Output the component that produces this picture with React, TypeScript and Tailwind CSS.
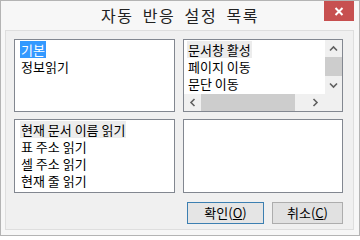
import React from "react";

const leftTopItems = ["기본", "정보읽기"];
const rightTopItems = ["문서창 활성", "페이지 이동", "문단 이동"];
const leftBottomItems = ["현재 문서 이름 읽기", "표 주소 읽기", "셀 주소 읽기", "현재 줄 읽기"];

const font = { fontFamily: '"Noto Sans CJK KR", "Noto Sans", sans-serif' };

// small chevron used by the scroll bar arrows
const Chevron: React.FC<{ dir: "up" | "down" | "left" | "right" }> = ({ dir }) => {
  const rot = { up: 0, right: 90, down: 180, left: 270 }[dir];
  return (
    <svg width="9" height="9" viewBox="0 0 9 9" style={{ transform: `rotate(${rot}deg)` }}>
      <path d="M1 6.5 L4.5 3 L8 6.5" fill="none" stroke="#606060" strokeWidth="1.6" />
    </svg>
  );
};

const ListBox: React.FC<{ items: string[]; selected?: number; focused?: boolean }> = ({
  items,
  selected,
  focused,
}) => (
  <div className="border border-[#828790] bg-white h-full">
    <ul className="pl-[5px] pt-[1px]">
      {items.map((item, idx) => (
        <li key={item} className="flex h-[17px]">
          <span
            className={`inline-block h-[17px] px-[1px] text-[13px] leading-[17px] whitespace-nowrap ${
              idx === selected
                ? focused
                  ? "bg-[#3399ff] text-white"
                  : "bg-[#ececec] text-black"
                : "text-black"
            }`}
          >
            {item}
          </span>
        </li>
      ))}
    </ul>
  </div>
);

const ScrollListBox: React.FC = () => (
  <div className="border border-[#828790] bg-white h-full flex flex-col">
    <div className="flex flex-1 min-h-0">
      <ul className="flex-1 pl-[3px] pt-[1px] overflow-hidden">
        {rightTopItems.map((item, idx) => (
          <li key={item} className="flex h-[17px]">
            <span
              className={`inline-block h-[17px] px-[1px] text-[13px] leading-[17px] whitespace-nowrap ${
                idx === 0 ? "bg-[#ececec]" : ""
              } text-black`}
            >
              {item}
            </span>
          </li>
        ))}
      </ul>
      {/* vertical scroll bar */}
      <div className="w-[17px] bg-[#f0f0f0] flex flex-col">
        <div className="h-[17px] flex items-center justify-center">
          <Chevron dir="up" />
        </div>
        <div className="h-[19px] bg-[#cdcdcd]" />
        <div className="flex-1 flex items-end justify-center pb-[4px]">
          <Chevron dir="down" />
        </div>
      </div>
    </div>
    {/* horizontal scroll bar */}
    <div className="h-[17px] flex bg-[#f0f0f0]">
      <div className="w-[17px] flex items-center justify-center">
        <Chevron dir="left" />
      </div>
      <div className="w-[94px] bg-[#cdcdcd]" />
      <div className="flex-1 flex items-center justify-end pr-[5px]">
        <Chevron dir="right" />
      </div>
      <div className="w-[17px]" />
    </div>
  </div>
);

const App: React.FC = () => {
  return (
    <div
      className="w-[360px] h-[236px] bg-[#f7f7f7] border border-[#b4b4b4] relative flex flex-col"
      style={font}
    >
      {/* Title bar */}
      <div className="h-[29px] flex items-center justify-center">
        <span className="text-[16px] leading-[20px] text-[#222] tracking-[1.6px] [word-spacing:4px] pb-[1px]">
          자동 반응 설정 목록
        </span>
      </div>
      <button className="absolute top-0 right-[5px] w-[30px] h-[20px] bg-[#c75050] flex items-center justify-center">
        <svg width="10" height="9" viewBox="0 0 10 9">
          <path d="M1.5 1 L8.5 8 M8.5 1 L1.5 8" stroke="white" strokeWidth="2" />
        </svg>
      </button>

      {/* Main panel */}
      <div className="ml-[4px] w-[349px] h-[200px] bg-[#f0f0f0] border border-[#dedede] pt-[8px] pl-[8px]">
        <div className="grid grid-cols-[161px_160px] grid-rows-[73px_74px] gap-x-[8px] gap-y-[7px]">
          <ListBox items={leftTopItems} selected={0} focused />
          <ScrollListBox />
          <ListBox items={leftBottomItems} selected={0} />
          <div className="border border-[#828790] bg-white" />
        </div>

        <div className="flex justify-end gap-[8px] pr-[10px] mt-[9px]">
          <button className="w-[77px] h-[22px] border border-[#3c7fb1] bg-[#e5e5e5] text-[13px] leading-[20px] text-black">
            확인(<span className="underline">O</span>)
          </button>
          <button className="w-[71px] h-[22px] border border-[#adadad] bg-[#e1e1e1] text-[13px] leading-[20px] text-black">
            취소(<span className="underline">C</span>)
          </button>
        </div>
      </div>
    </div>
  );
};

export default App;
